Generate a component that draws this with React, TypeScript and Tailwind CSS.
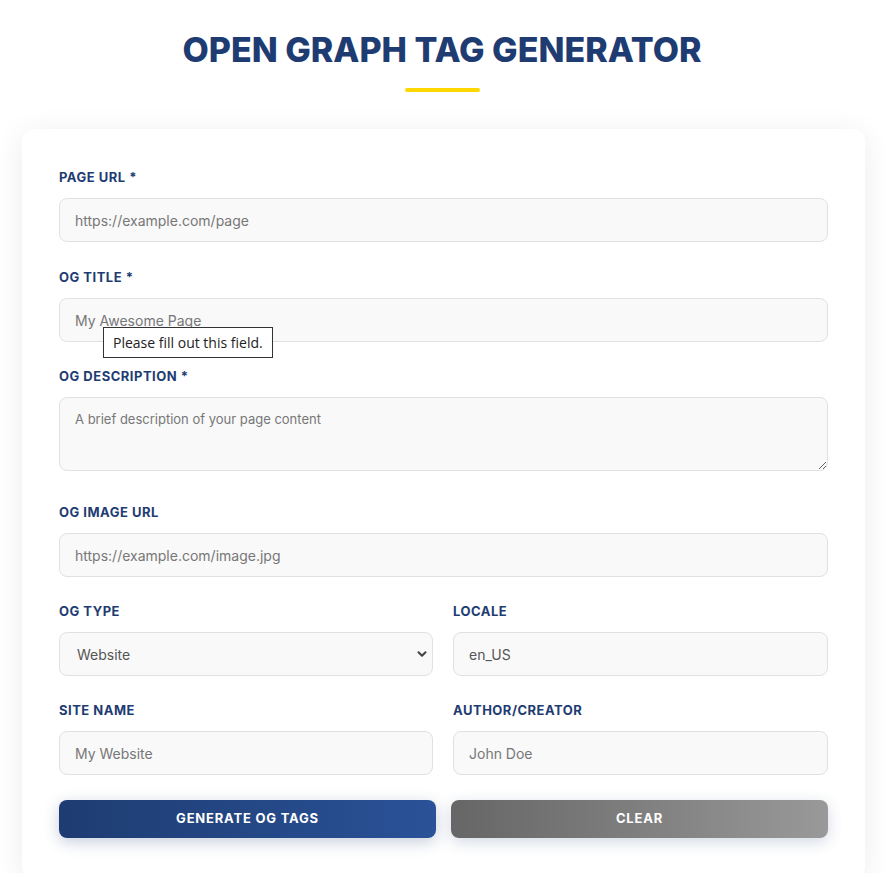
import { ChevronDown } from 'lucide-react'

const font = { fontFamily: 'Inter, "Liberation Sans", sans-serif' }

function Label({ children }: { children: React.ReactNode }) {
  return (
    <label className="block text-[13px] leading-[20px] font-bold tracking-[0.5px] text-[#1e3c72] mb-[11px]">
      {children}
    </label>
  )
}

const inputCls =
  'block w-full h-[44px] px-[15px] rounded-[8px] border border-[#e1e1e1] bg-[#f9f9f9] text-[14px] text-[#555] placeholder:text-[#777] outline-none'

export default function App() {
  return (
    <div className="min-h-screen bg-white" style={font}>
      <div className="pt-[23px] flex flex-col items-center">
        <h1 className="text-[34px] leading-[54px] font-extrabold tracking-[0px] text-[#1e3c72]">
          OPEN GRAPH TAG GENERATOR
        </h1>
        <div className="mt-[11px] h-[4px] w-[75px] rounded-full bg-[#ffd700]" />
      </div>

      <div className="mx-[22px] mt-[37px] w-[843px] rounded-[12px] bg-white px-[37px] pt-[38px] pb-[40px] shadow-[0_5px_30px_rgba(0,0,0,0.08)]">
        <div className="mb-[25px]">
          <Label>PAGE URL *</Label>
          <input className={inputCls} placeholder="https://example.com/page" />
        </div>

        <div className="mb-[24px] relative">
          <Label>OG TITLE *</Label>
          <input className={inputCls} placeholder="My Awesome Page" />
          <div
            className="absolute left-[44px] top-[60px] border border-[#333] bg-white px-[9px] h-[31px] flex items-center text-[14px] text-[#222] whitespace-nowrap"
            style={{ fontFamily: '"Open Sans", "Liberation Sans", sans-serif' }}
          >
            Please fill out this field.
          </div>
        </div>

        <div className="mb-[31px]">
          <Label>OG DESCRIPTION *</Label>
          <textarea
            className="block w-full h-[74px] px-[15px] py-[12px] rounded-[8px] border border-[#e1e1e1] bg-[#f9f9f9] text-[13px] text-[#555] placeholder:text-[#777] outline-none resize-y"
            placeholder="A brief description of your page content"
          />
        </div>

        <div className="mb-[24px]">
          <Label>OG IMAGE URL</Label>
          <input className={inputCls} placeholder="https://example.com/image.jpg" />
        </div>

        <div className="grid grid-cols-[374px_375px] gap-x-[20px] mb-[24px]">
          <div>
            <Label>OG TYPE</Label>
            <div className="relative">
              <select className={inputCls + ' appearance-none pl-[17px] text-[#555]'} defaultValue="website">
                <option value="website">Website</option>
                <option value="article">Article</option>
              </select>
              <ChevronDown
                className="absolute right-[4px] top-[15px] h-[14px] w-[14px] text-[#444] pointer-events-none"
                strokeWidth={3.5}
              />
            </div>
          </div>
          <div>
            <Label>LOCALE</Label>
            <input className={inputCls} defaultValue="en_US" />
          </div>
        </div>

        <div className="grid grid-cols-[374px_375px] gap-x-[20px] mb-[25px]">
          <div>
            <Label>SITE NAME</Label>
            <input className={inputCls} placeholder="My Website" />
          </div>
          <div>
            <Label>AUTHOR/CREATOR</Label>
            <input className={inputCls} placeholder="John Doe" />
          </div>
        </div>

        <div className="flex gap-[15px]">
          <button className="h-[38px] w-[377px] rounded-[8px] bg-gradient-to-r from-[#1e3c72] to-[#2a5298] text-white text-[13px] font-bold tracking-[0.8px] shadow-[0_4px_15px_rgba(30,60,114,0.25)]">
            GENERATE OG TAGS
          </button>
          <button className="h-[38px] w-[377px] rounded-[8px] bg-gradient-to-r from-[#666666] to-[#999999] text-white text-[13px] font-bold tracking-[0.8px] shadow-[0_4px_15px_rgba(30,60,114,0.2)]">
            CLEAR
          </button>
        </div>
      </div>
    </div>
  )
}
